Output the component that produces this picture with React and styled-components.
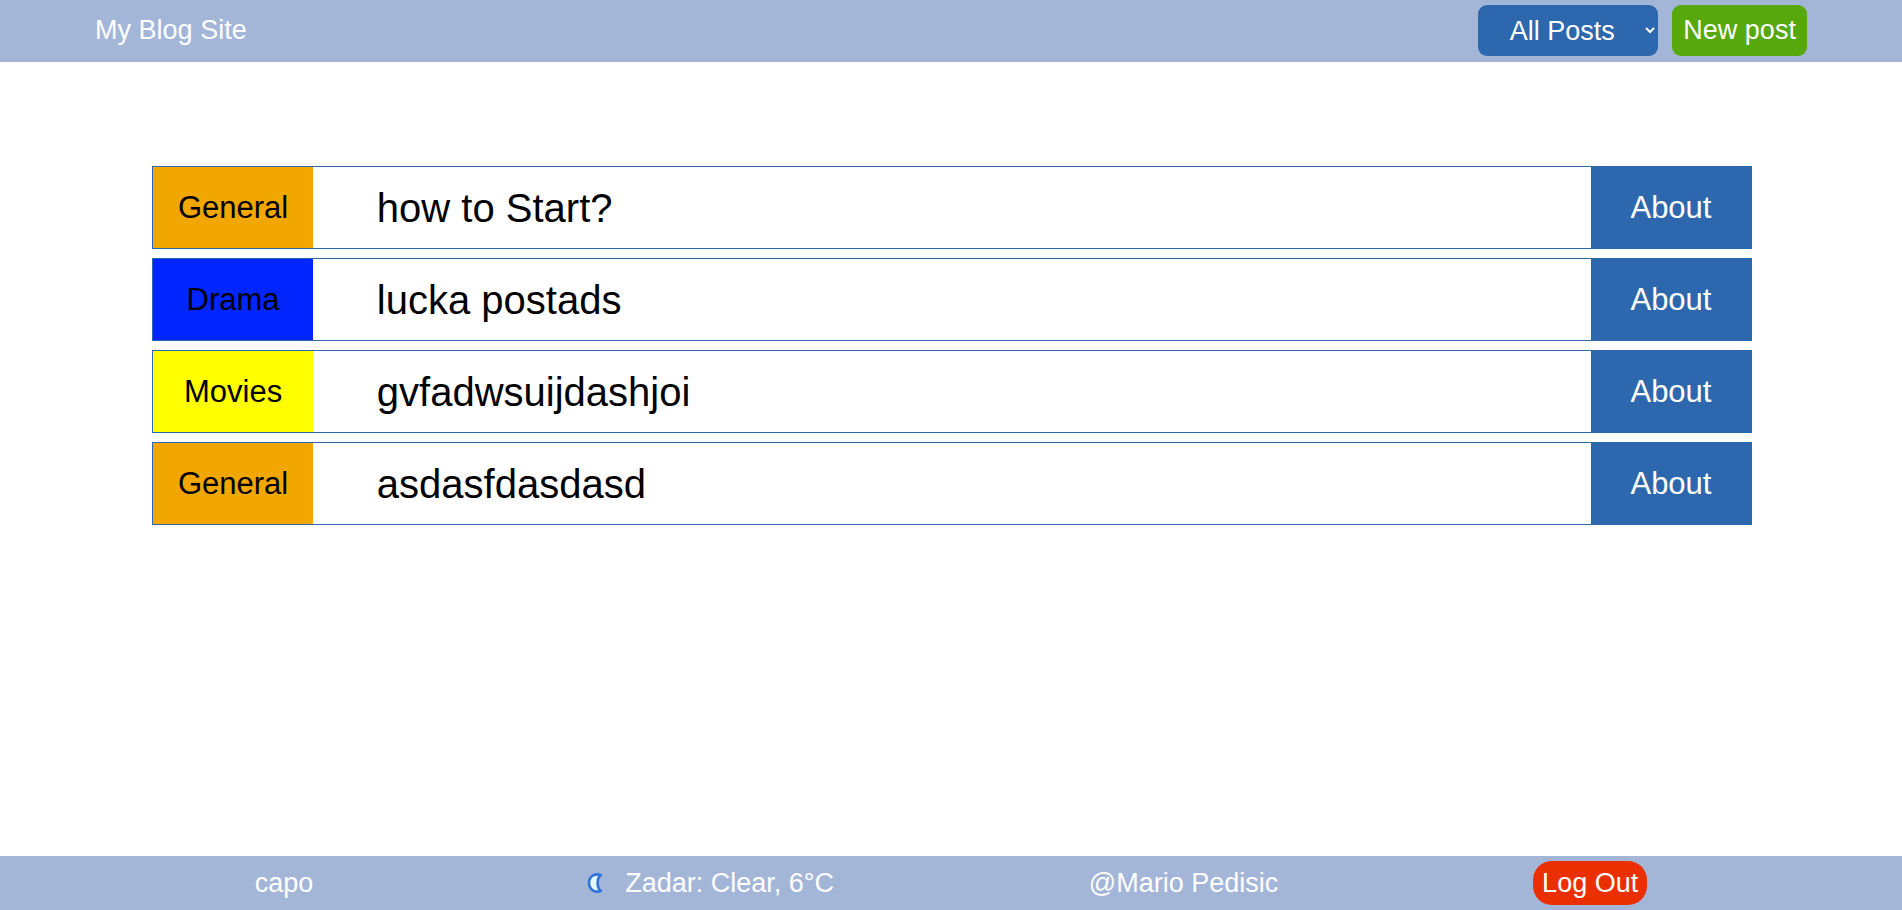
import React from "react";
import styled, { createGlobalStyle } from "styled-components";

const GlobalStyle = createGlobalStyle`
  *, *::before, *::after { box-sizing: border-box; }
  body {
    margin: 0;
    background: #ffffff;
    color: #000000;
    font-family: Arial, "Liberation Sans", sans-serif;
    font-size: 27px;
  }
`;

const Page = styled.div`
  min-height: 100vh;
  display: flex;
  flex-direction: column;
`;

const Header = styled.header`
  display: flex;
  align-items: center;
  justify-content: space-between;
  padding: 5px 5% 6px;
  background: #a3b6d8;
  color: #ffffff;
`;

const Brand = styled.a`
  color: inherit;
  text-decoration: none;
  line-height: 31px;
`;

const Actions = styled.div`
  display: flex;
  gap: 14px;
`;

const Filter = styled.select`
  width: 180px;
  height: 51px;
  border: 0;
  border-radius: 9px;
  background: #2d68ae;
  color: #ffffff;
  font: inherit;
  text-align: center;
`;

const Button = styled.button`
  height: 51px;
  padding: 0 11px;
  border: 0;
  border-radius: 9px;
  background: #56a80c;
  color: #ffffff;
  font: inherit;
  cursor: pointer;
`;

const LogOut = styled(Button)`
  height: 44px;
  padding: 0 9px;
  border-radius: 19px;
  background: #ea3000;
`;

const Posts = styled.main`
  flex: 1;
  display: flex;
  flex-direction: column;
  gap: 9px;
  padding: 104px 8%;
`;

const Post = styled.article`
  box-sizing: content-box;
  display: grid;
  grid-template-columns: 10% 1fr 10%;
  width: 100%;
  height: 81px;
  border: 1px solid #2d68ae;
`;

const Category = styled.div`
  display: flex;
  align-items: center;
  justify-content: center;
  background: ${(p) => p.$color};
  font-size: 31px;
`;

const Title = styled.h2`
  margin: 0;
  padding: 0 5%;
  align-self: center;
  font-size: 40px;
  font-weight: 400;
  line-height: 48px;
`;

const About = styled.button`
  border: 0;
  background: #2d68ae;
  color: #ffffff;
  font: inherit;
  font-size: 31px;
  cursor: pointer;
`;

const Footer = styled.footer`
  display: flex;
  align-items: center;
  justify-content: space-evenly;
  height: 54px;
  background: #a3b6d8;
  color: #ffffff;
`;

const Weather = styled.div`
  display: flex;
  align-items: center;
`;

const MoonBox = styled.span`
  display: flex;
  justify-content: center;
  width: 57px;
`;

const Moon = () => (
  <MoonBox>
    <svg width="20" height="20" viewBox="0 0 20 20" aria-hidden="true">
      <path
        d="M13.8 2.2C9.6 0.2 2 2.300 2 10s7.600 9.800 11.800 7.800C9.600 15 9.600 5 13.800 2.200Z"
        fill="#e4fbff"
        stroke="#2f74d8"
        strokeWidth="2.600"
        strokeLinejoin="round"
      />
    </svg>
  </MoonBox>
);

const colors = { General: "#f2a600", Drama: "#0025ff", Movies: "#ffff00" };

const posts = [
  { category: "General", title: "how to Start?" },
  { category: "Drama", title: "lucka postads" },
  { category: "Movies", title: "gvfadwsuijdashjoi" },
  { category: "General", title: "asdasfdasdasd" },
];

export default function App() {
  return (
    <Page>
      <GlobalStyle />
      <Header>
        <Brand href="#">My Blog Site</Brand>
        <Actions>
          <Filter aria-label="Filter posts" defaultValue="All Posts">
            <option>All Posts</option>
            <option>General</option>
            <option>Drama</option>
            <option>Movies</option>
          </Filter>
          <Button type="button">New post</Button>
        </Actions>
      </Header>
      <Posts>
        {posts.map((post) => (
          <Post key={post.title}>
            <Category $color={colors[post.category]}>{post.category}</Category>
            <Title>{post.title}</Title>
            <About type="button">About</About>
          </Post>
        ))}
      </Posts>
      <Footer>
        <span>capo</span>
        <Weather>
          <Moon />
          <span>Zadar: Clear, 6°C</span>
        </Weather>
        <span>@Mario Pedisic</span>
        <LogOut type="button">Log Out</LogOut>
      </Footer>
    </Page>
  );
}
